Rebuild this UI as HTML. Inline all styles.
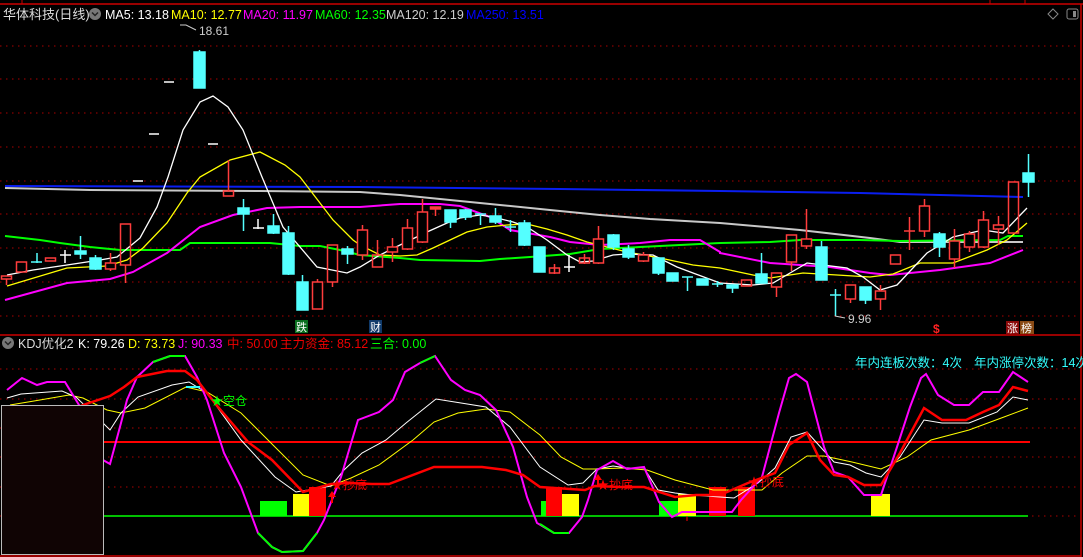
<!DOCTYPE html>
<html><head><meta charset="utf-8"><style>
html,body{margin:0;padding:0;background:#000;width:1083px;height:557px;overflow:hidden}
svg{display:block}
text{font-family:"Liberation Sans","Noto Sans CJK SC",sans-serif}
</style></head><body>
<svg width="1083" height="557" viewBox="0 0 1083 557" xmlns="http://www.w3.org/2000/svg">
<rect width="1083" height="557" fill="#000"/>
<line x1="0" y1="4" x2="1083" y2="4" stroke="#c00" stroke-width="1.5"/>
<line x1="22" y1="0" x2="22" y2="4" stroke="#c00"/>
<line x1="990" y1="0" x2="990" y2="4" stroke="#c00"/>
<line x1="1025" y1="0" x2="1025" y2="4" stroke="#c00"/>
<line x1="1081" y1="4" x2="1081" y2="557" stroke="#c00" stroke-width="1.5"/>
<line x1="0" y1="335" x2="1081" y2="335" stroke="#c00" stroke-width="1.5"/>
<line x1="0" y1="556" x2="1081" y2="556" stroke="#c00" stroke-width="1.5"/>
<g stroke="#a00" stroke-dasharray="1.5 4.5" stroke-width="1">
<line x1="0" y1="46" x2="1080" y2="46"/><line x1="0" y1="79" x2="1080" y2="79"/><line x1="0" y1="113" x2="1080" y2="113"/><line x1="0" y1="147" x2="1080" y2="147"/><line x1="0" y1="181" x2="1080" y2="181"/><line x1="0" y1="214" x2="1080" y2="214"/><line x1="0" y1="248" x2="1080" y2="248"/><line x1="0" y1="282" x2="1080" y2="282"/><line x1="0" y1="316" x2="1080" y2="316"/>
<line x1="0" y1="369" x2="1080" y2="369"/><line x1="0" y1="399" x2="1080" y2="399"/><line x1="0" y1="428" x2="1080" y2="428"/><line x1="0" y1="457" x2="1080" y2="457"/><line x1="0" y1="487" x2="1080" y2="487"/><line x1="0" y1="516" x2="1080" y2="516"/>
</g>
<text x="3" y="19" font-size="13" fill="#ddd">华体科技(日线)</text>
<circle cx="95" cy="14" r="6" fill="#777"/><path d="M92 12.5 L95 15.5 L98 12.5" stroke="#222" stroke-width="1.5" fill="none"/>
<text x="105" y="19" font-size="12.5" fill="#fff">MA5: 13.18</text>
<text x="171" y="19" font-size="12.5" fill="#ff0">MA10: 12.77</text>
<text x="243" y="19" font-size="12.5" fill="#f0f">MA20: 11.97</text>
<text x="315" y="19" font-size="12.5" fill="#0f0">MA60: 12.35</text>
<text x="386" y="19" font-size="12.5" fill="#ccc">MA120: 12.19</text>
<text x="466" y="19" font-size="12.5" fill="#00f">MA250: 13.51</text>
<path d="M1053 9 L1058 14 L1053 19 L1048 14 Z" stroke="#888" fill="none"/>
<rect x="1067" y="9" width="11" height="10" rx="2" stroke="#888" fill="none"/><rect x="1073" y="11" width="3" height="6" fill="#888"/>
<g fill="none" stroke-width="1.3">
<polyline stroke="#0a1ef0" stroke-width="2" points="5,186 360,187 560,189 720,191 860,193 1023,197"/>
<polyline stroke="#c8c8c8" stroke-width="2" points="5,188 90,190 260,191 360,192 400,195 450,200 500,205 550,210 600,215 650,219 720,223 800,230 870,238 900,242 1023,242"/>
<polyline stroke="#0f0" stroke-width="2" points="5,236 40,240 60,243 90,247 120,250 180,250 190,243 270,243 300,246 320,246 340,250 360,255 400,258 420,260 480,261 500,259 530,257 570,254 600,249 720,243 770,242 800,240 860,240 900,241 1000,240 1008,236 1023,236"/>
<polyline stroke="#f0f" stroke-width="2" points="5,300 67,283 110,279 133,272 167,253 200,227 233,215 267,208 300,207 360,207 400,204 440,204 460,206 490,217 510,230 550,237 570,242 600,245 640,243 670,240 700,240 720,252 720,253 770,263 830,267 870,273 890,275 940,270 990,263 1023,250"/>
<polyline stroke="#ff0" points="7,286 67,268 107,266 127,260 143,248 167,223 187,193 200,177 230,160 260,152 285,165 300,177 310,190 333,220 353,240 360,245 380,255 400,256 417,255 433,248 450,240 467,232 487,227 507,225 527,224 547,229 567,235 587,242 607,247 627,252 660,258 693,265 720,268 753,275 770,278 803,273 837,275 870,277 893,274 920,263 953,263 987,250 1007,240 1027,223"/>
<polyline stroke="#fff" points="7,275 33,270 67,265 100,260 117,257 140,238 157,207 168,177 183,130 200,102 213,96 228,107 243,130 262,177 283,227 317,267 347,273 360,267 380,255 400,245 427,232 447,223 460,218 480,215 493,217 513,222 527,227 547,240 567,255 580,262 593,261 613,255 627,254 653,255 677,267 693,273 720,283 753,285 773,283 807,263 847,268 863,277 880,290 897,285 927,253 953,237 983,230 1003,233 1027,208"/>
</g>
<g stroke="#ff3c3c" fill="none" stroke-width="1.5">
<line x1="6.5" y1="279" x2="6.5" y2="285"/><rect x="1.5" y="276" width="10" height="3"/>
<rect x="16.5" y="262" width="10" height="10"/>
<rect x="45.5" y="258" width="10" height="3"/>
<line x1="110.5" y1="253" x2="110.5" y2="271"/><rect x="105.5" y="263" width="10" height="6" fill="#000"/>
<line x1="125.5" y1="265" x2="125.5" y2="283"/><rect x="120.5" y="224" width="10" height="41"/>
<line x1="228.5" y1="160" x2="228.5" y2="191"/><rect x="223.5" y="191" width="10" height="5"/>
<line x1="317.5" y1="279" x2="317.5" y2="282"/><rect x="312.5" y="282" width="10" height="27"/>
<line x1="332.5" y1="282" x2="332.5" y2="287"/><rect x="327.5" y="245" width="10" height="37"/>
<line x1="362.5" y1="225" x2="362.5" y2="260"/><rect x="357.5" y="230" width="10" height="25" fill="#000"/>
<line x1="377.5" y1="240" x2="377.5" y2="255"/><rect x="372.5" y="255" width="10" height="12"/>
<line x1="392.5" y1="238" x2="392.5" y2="262"/><rect x="387.5" y="247" width="10" height="5" fill="#000"/>
<line x1="407.5" y1="219" x2="407.5" y2="250"/><rect x="402.5" y="228" width="10" height="21" fill="#000"/>
<line x1="422.5" y1="199" x2="422.5" y2="243"/><rect x="417.5" y="212" width="10" height="30" fill="#000"/>
<line x1="435.5" y1="207" x2="435.5" y2="216"/><rect x="430.5" y="207" width="10" height="2" fill="#ff3c3c"/>
<line x1="554.5" y1="264" x2="554.5" y2="274"/><rect x="549.5" y="268" width="10" height="5"/>
<line x1="584.5" y1="254" x2="584.5" y2="264"/><rect x="579.5" y="258" width="10" height="5"/>
<line x1="598.5" y1="226" x2="598.5" y2="264"/><rect x="593.5" y="239" width="10" height="24" fill="#000"/>
<line x1="643.5" y1="252" x2="643.5" y2="262"/><rect x="638.5" y="255" width="10" height="6" fill="#000"/>
<rect x="741.5" y="280" width="10" height="6"/>
<line x1="776.5" y1="287" x2="776.5" y2="297"/><rect x="771.5" y="273" width="10" height="14"/>
<line x1="791.5" y1="262" x2="791.5" y2="271"/><rect x="786.5" y="235" width="10" height="27"/>
<line x1="806.5" y1="209" x2="806.5" y2="249"/><rect x="801.5" y="239" width="10" height="7" fill="#000"/>
<line x1="850.5" y1="299" x2="850.5" y2="303"/><rect x="845.5" y="285" width="10" height="14"/>
<line x1="880.5" y1="285" x2="880.5" y2="310"/><rect x="875.5" y="291" width="10" height="8" fill="#000"/>
<rect x="890.5" y="255" width="10" height="9"/>
<line x1="909.5" y1="217" x2="909.5" y2="250"/><line x1="904" y1="231" x2="915" y2="231"/>
<line x1="924.5" y1="199" x2="924.5" y2="237"/><rect x="919.5" y="206" width="10" height="25" fill="#000"/>
<line x1="954.5" y1="229" x2="954.5" y2="268"/><rect x="949.5" y="241" width="10" height="18" fill="#000"/>
<line x1="969.5" y1="231" x2="969.5" y2="252"/><rect x="964.5" y="234" width="10" height="13" fill="#000"/>
<line x1="983.5" y1="211" x2="983.5" y2="248"/><rect x="978.5" y="220" width="10" height="27" fill="#000"/>
<line x1="998.5" y1="216" x2="998.5" y2="245"/><rect x="993.5" y="225" width="10" height="4" fill="#000"/>
<rect x="1008.5" y="182" width="10" height="51"/>
</g>
<g stroke="#54ffff" fill="#54ffff" stroke-width="1.5">
<line x1="37" y1="253" x2="37" y2="263"/><line x1="31" y1="262" x2="42" y2="262"/>
<line x1="80.5" y1="236" x2="80.5" y2="259"/><rect x="75" y="251" width="11" height="3"/>
<line x1="95.5" y1="255" x2="95.5" y2="270"/><rect x="90" y="258" width="11" height="11"/>
<line x1="199.5" y1="50" x2="199.5" y2="52"/><rect x="194" y="52" width="11" height="36"/>
<line x1="243.5" y1="199" x2="243.5" y2="231"/><rect x="238" y="208" width="11" height="6"/>
<line x1="273.5" y1="214" x2="273.5" y2="234"/><rect x="268" y="226" width="11" height="7"/>
<line x1="288.5" y1="226" x2="288.5" y2="275"/><rect x="283" y="233" width="11" height="41"/>
<line x1="302.5" y1="275" x2="302.5" y2="282"/><rect x="297" y="282" width="11" height="28"/>
<line x1="347.5" y1="246" x2="347.5" y2="264"/><rect x="342" y="249" width="11" height="5"/>
<line x1="450.5" y1="222" x2="450.5" y2="228"/><rect x="445" y="210" width="11" height="12"/>
<line x1="465.5" y1="209" x2="465.5" y2="220"/><rect x="460" y="210" width="11" height="7"/>
<line x1="480.5" y1="214" x2="480.5" y2="225"/><line x1="475" y1="214" x2="486" y2="214"/>
<line x1="495.5" y1="208" x2="495.5" y2="224"/><rect x="490" y="216" width="11" height="6"/>
<line x1="510.5" y1="220" x2="510.5" y2="232"/><line x1="505" y1="227" x2="516" y2="227"/>
<line x1="524.5" y1="220" x2="524.5" y2="246"/><rect x="519" y="223" width="11" height="22"/>
<rect x="534" y="247" width="11" height="25"/>
<line x1="613.5" y1="234" x2="613.5" y2="250"/><rect x="608" y="235" width="11" height="12"/>
<line x1="628.5" y1="245" x2="628.5" y2="259"/><rect x="623" y="249" width="11" height="8"/>
<line x1="658.5" y1="258" x2="658.5" y2="275"/><rect x="653" y="258" width="11" height="15"/>
<rect x="667" y="273" width="11" height="8"/>
<line x1="687.5" y1="277" x2="687.5" y2="291"/><line x1="682" y1="277" x2="693" y2="277"/>
<rect x="697" y="279" width="11" height="6"/>
<line x1="712" y1="284" x2="723" y2="284"/><line x1="717.5" y1="281" x2="717.5" y2="287"/>
<line x1="732.5" y1="285" x2="732.5" y2="293"/><rect x="727" y="285" width="11" height="3"/>
<line x1="761.5" y1="253" x2="761.5" y2="283"/><rect x="756" y="274" width="11" height="9"/>
<line x1="821.5" y1="241" x2="821.5" y2="280"/><rect x="816" y="247" width="11" height="33"/>
<line x1="835.5" y1="289" x2="835.5" y2="316"/><line x1="830" y1="295" x2="841" y2="295"/>
<line x1="865.5" y1="287" x2="865.5" y2="304"/><rect x="860" y="287" width="11" height="13"/>
<line x1="939.5" y1="232" x2="939.5" y2="257"/><rect x="934" y="234" width="11" height="13"/>
<line x1="1028.5" y1="154" x2="1028.5" y2="197"/><rect x="1023" y="173" width="11" height="9"/>
</g>
<g stroke="#fff" stroke-width="1.5">
<line x1="65" y1="250" x2="65" y2="263"/><line x1="60" y1="255" x2="71" y2="255"/>
<line x1="258" y1="219" x2="258" y2="229"/><line x1="253" y1="228" x2="264" y2="228"/>
<line x1="569" y1="255" x2="569" y2="272"/><line x1="564" y1="267" x2="575" y2="267"/>
<line x1="133" y1="181" x2="143" y2="181"/><line x1="149" y1="134" x2="159" y2="134"/><line x1="164" y1="82" x2="174" y2="82"/><line x1="208" y1="144" x2="218" y2="144"/>
</g>
<path d="M180 25 L186 25 L196 30" stroke="#ccc" fill="none"/>
<text x="199" y="35" font-size="12" fill="#ccc">18.61</text>
<path d="M835 316 L845 318" stroke="#ccc" fill="none"/>
<text x="848" y="323" font-size="12" fill="#ccc">9.96</text>
<rect x="295" y="320" width="13" height="13" fill="#0a6e1e"/><text x="296" y="331" font-size="11" fill="#fff">跌</text>
<rect x="369" y="320" width="13" height="13" fill="#103a6a"/><text x="370" y="331" font-size="11" fill="#fff">财</text>
<text x="933" y="333" font-size="12" fill="#f22" font-weight="bold">$</text>
<rect x="1006" y="321" width="13" height="13" fill="#8b0a0a"/><text x="1007" y="332" font-size="11" fill="#fff">涨</text>
<rect x="1020" y="321" width="14" height="13" fill="#8a4a14"/><text x="1021" y="332" font-size="11" fill="#fff">榜</text>
<circle cx="8" cy="343" r="6" fill="#777"/><path d="M5 341.5 L8 344.5 L11 341.5" stroke="#222" stroke-width="1.5" fill="none"/>
<text x="18" y="348" font-size="12.5" fill="#ddd">KDJ优化2</text>
<text x="78" y="348" font-size="12.5" fill="#fff">K: 79.26</text>
<text x="128" y="348" font-size="12.5" fill="#ff0">D: 73.73</text>
<text x="178" y="348" font-size="12.5" fill="#f0f">J: 90.33</text>
<text x="227" y="348" font-size="12.5" fill="#e00">中: 50.00</text>
<text x="280" y="348" font-size="12.5" fill="#e00">主力资金: 85.12</text>
<text x="370" y="348" font-size="12.5" fill="#0f0">三合: 0.00</text>
<text x="855" y="367" font-size="12.5" fill="#3ff">年内连板次数：4次</text>
<text x="974" y="367" font-size="12.5" fill="#3ff">年内涨停次数：14次</text>
<line x1="100" y1="442" x2="1030" y2="442" stroke="#f00" stroke-width="2"/>
<line x1="6" y1="516" x2="1028" y2="516" stroke="#0f0" stroke-width="1.5"/>
<g>
<rect x="260" y="501" width="27" height="15" fill="#0f0"/><rect x="293" y="494" width="16" height="22" fill="#ff0"/><rect x="309" y="487" width="17" height="29" fill="#f00"/>
<rect x="541" y="501" width="27" height="15" fill="#0f0"/><rect x="562" y="494" width="17" height="22" fill="#ff0"/><rect x="546" y="487" width="16" height="29" fill="#f00"/>
<rect x="659" y="501" width="26" height="15" fill="#0f0"/><rect x="678" y="494" width="18" height="22" fill="#ff0"/><rect x="709" y="487" width="17" height="29" fill="#f00"/>
<rect x="738" y="487" width="17" height="29" fill="#f00"/><rect x="871" y="494" width="19" height="22" fill="#ff0"/>
</g>
<g fill="none">
<polyline stroke="#ff0" stroke-width="1" points="10,405 34,401 69,395 83,398 107,410 121,413 145,408 186,387 207,392 241,413 275,447 303,475 331,486 351,478 379,465 413,440 434,422 458,413 486,409 510,412 540,435 561,457 583,469 595,469 623,468 647,470 675,480 713,490 762,490 782,473 807,456 824,456 852,462 881,469 907,457 931,440 969,430 1004,417 1028,408"/>
<polyline stroke="#fff" stroke-width="1" points="7,398 21,394 62,391 76,397 103,423 110,430 121,413 138,397 172,385 189,382 207,393 241,440 275,477 296,492 331,486 344,470 362,453 386,440 406,423 436,399 461,403 486,407 510,427 540,467 568,485 583,483 597,469 613,466 627,468 644,468 658,490 675,493 692,495 734,498 758,483 775,468 791,437 807,432 834,462 850,465 866,473 881,477 900,457 924,420 942,423 969,423 997,412 1013,397 1028,400"/>
<polyline stroke="#f0f" stroke-width="2" points="7,390 22,378 37,385 47,382 65,382 79,405 103,460 110,464 121,423 127,400 137,377 153,362 170,356 185,356 197,377 207,400 224,453 241,487 258,533 272,547 282,552 303,551 317,533 324,520 341,477 358,420 379,412 393,400 405,372 420,363 435,356 451,380 465,390 480,395 496,410 513,447 527,497 537,523 554,533 569,533 582,517 588,500 597,470 613,461 627,469 644,467 659,502 672,517 682,512 698,512 732,512 741,500 762,477 779,413 789,378 796,374 807,382 824,447 834,472 848,477 864,495 881,495 897,447 910,407 921,378 926,374 938,395 954,405 969,405 983,392 999,392 1013,372 1028,382"/>
<polyline stroke="#0f0" stroke-width="2" points="153,362 170,356 185,356"/>
<polyline stroke="#0f0" stroke-width="2" points="420,363 435,356"/>
<polyline stroke="#0f0" stroke-width="2" points="258,533 272,547 282,552 303,551 317,533"/>
<polyline stroke="#0f0" stroke-width="2" points="540,524 554,533 569,533"/>
<polyline stroke="#3ff" stroke-width="2" points="186,387 200,387"/>
<polyline stroke="#f00" stroke-width="2.5" points="7,443 22,428 41,418 65,412 86,404 110,396 124,387 137,377 167,371 185,371 197,380 207,393 218,407 248,442 272,460 303,492 331,484 348,483 372,484 389,484 434,467 482,467 506,470 523,475 540,487 585,490 595,486 620,487 644,487 675,497 696,495 720,495 748,483 775,473 789,445 807,433 820,460 834,475 848,477 864,485 881,485 900,453 924,408 942,420 966,420 983,412 999,405 1013,387 1028,391"/>
</g>
<rect x="1.5" y="405.5" width="102" height="149" fill="#100404" stroke="#bbb" stroke-width="1"/>
<text x="211" y="405" font-size="12" fill="#0f0">★空仓</text>
<text x="331" y="489" font-size="12" fill="#f00">★抄底</text>
<path d="M332 491 L328 497 L331 497 L331 503 L333 503 L333 497 L336 497 Z" fill="#f00"/>
<text x="597" y="489" font-size="12" fill="#f00">★抄底</text>
<path d="M598 474 L594 480 L597 480 L597 486 L599 486 L599 480 L602 480 Z" fill="#f00"/>
<text x="748" y="486" font-size="12" fill="#f00">★抄底</text>
<line x1="687" y1="516" x2="687" y2="521" stroke="#f00"/>
</svg>
</body></html>
